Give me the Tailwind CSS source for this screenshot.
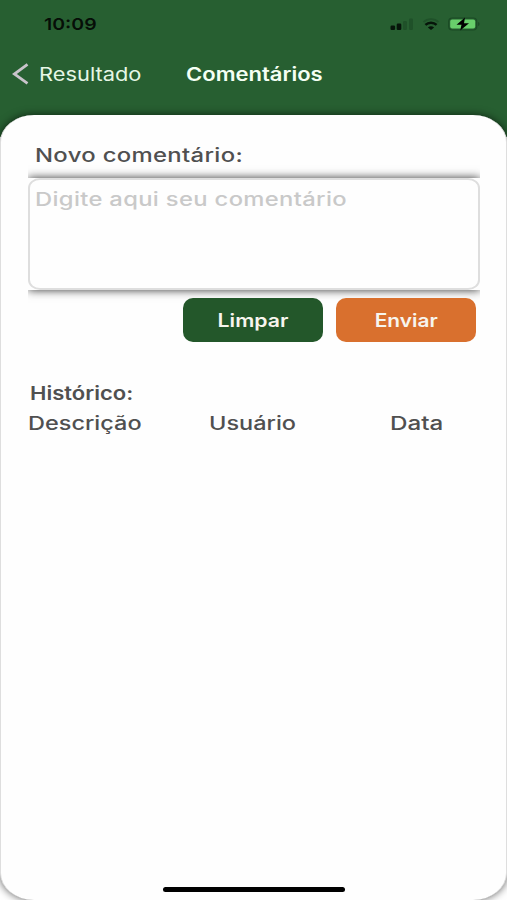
<!DOCTYPE html>
<html lang="pt-BR">

<head>
    <meta charset="UTF-8">
    <meta name="viewport" content="width=device-width, initial-scale=1.0">
    <title>Comentários</title>
    <script src="https://cdn.jsdelivr.net/npm/@tailwindcss/browser@4"></script>
</head>

<body class="h-[900px] overflow-hidden bg-white font-['Inter',sans-serif] text-[#505050]">

    <header class="h-[137px] bg-[#275f31]">
        <!-- Status bar -->
        <div class="flex h-[47px] items-center justify-between pl-[44px] pr-[27px] text-black/85">
            <span class="mt-[2px] inline-block origin-left scale-x-[1.18] text-[16.5px] leading-none font-semibold">10:09</span>
            <div class="flex items-center">
                <svg class="h-3 w-6" viewBox="0 0 24 12">
                    <rect x="0.5" y="7.5" width="4.6" height="4.5" rx="1.2" fill="#06150a" />
                    <rect x="6.7" y="5.5" width="4.6" height="6.5" rx="1.2" fill="#06150a" />
                    <rect x="13" y="3" width="4" height="9" rx="1.2" fill="#1f5129" />
                    <rect x="19" y="0.5" width="4" height="11.5" rx="1.2" fill="#1f5129" />
                </svg>
                <svg class="ml-2 h-3 w-[18px]" viewBox="0 0 18 12" fill="none">
                    <path d="M1.5 4.2C5.5.2 12.5.2 16.5 4.2" stroke="#1f5129" stroke-width="1.8" />
                    <path d="M3.4 6.9c3-2.9 8.2-2.9 11.2 0" stroke="#06150a" stroke-width="2.4" />
                    <path d="M5.9 9.4c1.7-1.5 4.5-1.5 6.2 0L9 12z" fill="#06150a" />
                </svg>
                <svg class="ml-[8px] h-[14px] w-[32px]" viewBox="0 0 32 14">
                    <rect x="0.7" y="1" width="28" height="12" rx="3.5" fill="none" stroke="#1b4a25" stroke-width="1.2" />
                    <rect x="2.2" y="2.4" width="25" height="9.2" rx="2" fill="#68cf6b" />
                    <path d="M30 5v4c2-.6 2-3.4 0-4z" fill="#1b4a25" />
                    <path d="M17 0.5 8.5 7.8h5L12.2 13.5 21 6.2h-5z" fill="#000" />
                </svg>
            </div>
        </div>

        <!-- Nav bar -->
        <nav class="flex h-[54px] items-center pl-3 text-white">
            <svg class="h-[22px] w-[17px]" viewBox="0 0 17 22" fill="none">
                <path d="M15.5 1.3 2.3 11l13.2 9.3" stroke="#c9c4cb" stroke-width="2.8" />
            </svg>
            <a href="#" class="mt-[2px] ml-[10px] w-[147px] whitespace-nowrap"><span class="inline-block origin-left scale-x-[1.18] text-[18.5px] leading-none text-[#e6f7e6]">Resultado</span></a>
            <h1 class="origin-left scale-x-[1.19] text-[18.5px] leading-none font-semibold text-[#f4fff4]">Comentários</h1>
        </nav>
    </header>

    <main class="relative -mt-[22px] h-[785px] rounded-[34px/27px] border-x border-[#dedede] bg-[#fefefe] px-[27px] pt-[29px] shadow-[0_0_9px_rgba(0,0,0,0.65)]">
        <label for="comentario" class="block h-[34px] pl-[7px]"><span class="inline-block origin-left scale-x-[1.29] text-[18.5px] leading-none font-medium tracking-[0.25px]">Novo comentário:</span></label>

        <!-- The shadow only shows above and below the field -->
        <div class="-my-4 w-[452px] py-4 [clip-path:inset(0)]">
            <div class="h-[112px] bg-[#fefefe] shadow-[0_0_9px_rgba(0,0,0,0.8)]">
                <div id="comentario" class="h-full rounded-[12px/10px] border-2 border-[#dedede] px-[5px] pt-[8px] text-[#c9c9c9]"><span class="inline-block origin-left scale-x-[1.285] text-[18.5px] leading-none font-medium tracking-[0.26px] whitespace-nowrap">Digite aqui seu comentário</span></div>
            </div>
        </div>

        <div class="relative mt-2 flex justify-end gap-[13px] pr-[3px] text-[#f7f5ee]">
            <button class="h-11 w-[140px] rounded-[10px] bg-[#23572a] pt-[2px]"><span class="inline-block scale-x-[1.18] text-[18px] leading-none font-semibold">Limpar</span></button>
            <button class="h-11 w-[140px] rounded-[10px] bg-[#d9702e] pt-[2px]"><span class="inline-block scale-x-[1.16] text-[18px] leading-none font-semibold">Enviar</span></button>
        </div>

        <h2 class="mt-[40px] h-[32px] pl-[2px]"><span class="inline-block origin-left scale-x-[1.19] text-[18.5px] leading-none font-semibold">Histórico:</span></h2>
        <div class="grid grid-cols-[181px_181px_1fr] text-[18.5px] leading-none font-medium">
            <span class="origin-left scale-x-[1.27]">Descrição</span>
            <span class="origin-left scale-x-[1.27]">Usuário</span>
            <span class="origin-left scale-x-[1.31]">Data</span>
        </div>

        <!-- Home indicator -->
        <div class="absolute bottom-2 left-[162px] h-[5px] w-[182px] rounded-full bg-black"></div>
    </main>

</body>

</html>
